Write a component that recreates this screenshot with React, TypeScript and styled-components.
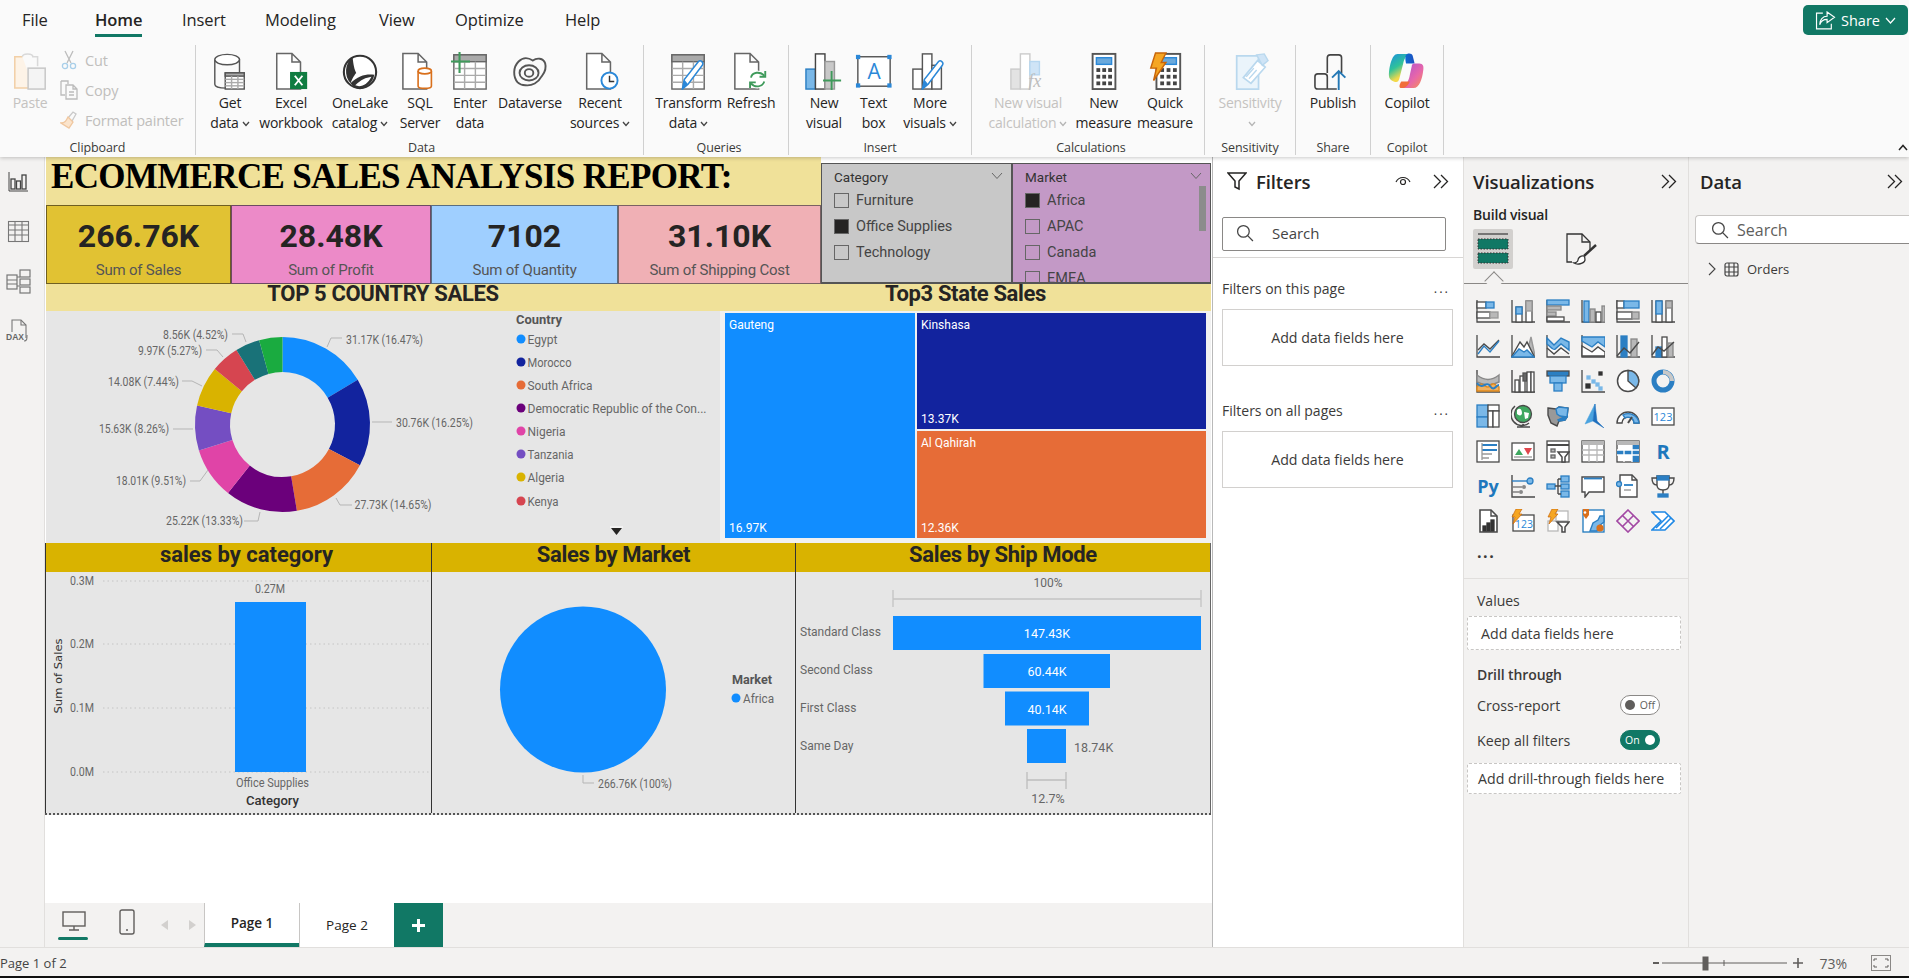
import React from "react";
import styled, { createGlobalStyle } from "styled-components";

const UI = `"Open Sans", "Noto Sans", sans-serif`;
const DIN = `Roboto, "Liberation Sans", sans-serif`;
const GREEN = "#117865";
const D = "#4a4a4a";
const B = "#2b7fc3";
const L = "#7ab8e8";
const G = "#b8b8b8";

const Global = createGlobalStyle`
  html, body { margin: 0; padding: 0; background: #fff; overflow: hidden; }
  body { font-family: ${UI}; color: #252423; }
`;

const Page = styled.div`
  width: 1909px; height: 978px; display: flex; flex-direction: column; overflow: hidden; background: #fff;
`;
const Ribbon = styled.header`
  height: 157px; flex: none; background: #fafafa; box-shadow: 0 1px 4px rgba(0,0,0,.22);
  position: relative; z-index: 3; display: flex; flex-direction: column;
`;
const TabRow = styled.nav`
  height: 45px; display: flex; padding-left: 22px; position: relative;
`;
const MenuTab = styled.div<{ $w: number; $active?: boolean }>`
  width: ${p => p.$w}px; flex: none; height: 37px; padding-top: 7px; box-sizing: border-box; font-size: 16.5px; line-height: 26px; letter-spacing: -0.1px;
  font-weight: ${p => (p.$active ? 600 : 400)};
  span { display: inline-block; height: 27px; border-bottom: ${p => (p.$active ? `3px solid ${GREEN}` : "none")}; box-sizing: content-box; }
`;
const ShareButton = styled.button`
  position: absolute; right: 1px; top: 5px; width: 105px; height: 30px; border: 0; border-radius: 5px; background: ${GREEN};
  color: #fff; font: 400 14.5px ${UI}; display: flex; align-items: center; justify-content: center; gap: 5px; padding: 0;
`;
const GroupRow = styled.div`display: flex; height: 110px;`;
const Group = styled.section<{ $w: number; $pad?: number; $last?: boolean }>`
  width: ${p => p.$w}px; flex: none; box-sizing: border-box; display: flex; flex-direction: column; padding-left: ${p => p.$pad ?? 0}px;
  border-right: 1px solid #d0d0d0;
`;
const GroupBody = styled.div`display: flex; flex: 1;`;
const GroupLabel = styled.div<{ $off?: number }>`
  font-size: 12.5px; line-height: 14px; height: 14px; text-align: center; color: #3b3a39; margin-left: ${p => p.$off ?? 0}px; letter-spacing: -0.1px;
`;
const BigBtn = styled.div<{ $w: number; $off?: boolean }>`
  width: ${p => p.$w}px; flex: none; padding-top: 7px; display: flex; flex-direction: column; align-items: center;
  color: ${p => (p.$off ? "#c4c2c0" : "#252423")}; font-size: 14px; line-height: 20px; text-align: center; letter-spacing: -0.2px; white-space: nowrap;
  svg.ico { width: 38px; height: 38px; margin-bottom: 3px; display: block; }
`;
const Caret = styled.svg`width: 8px; height: 6px; margin-left: 3px; display: inline-block; vertical-align: 1px;`;
const Clip = styled.div`display: flex; flex: 1; padding-left: 12px;`;
const PasteBtn = styled(BigBtn)`width: 36px;`;
const ClipList = styled.div`display: flex; flex-direction: column; padding: 0 0 0 12px;`;
const ClipItem = styled.div`
  height: 30px; display: flex; align-items: center; gap: 7px; color: #c0bebc; font-size: 14.5px; letter-spacing: -0.2px; white-space: nowrap;
  svg { width: 18px; height: 20px; flex: none; }
`;
const CollapseBtn = styled.svg`position: absolute; right: 1px; bottom: 6px; width: 10px; height: 7px;`;

const Main = styled.main`flex: 1; display: flex; min-height: 0;`;
const Rail = styled.aside`
  width: 45px; flex: none; box-sizing: border-box; background: #f3f2f1; border-right: 1px solid #e1dfdd; display: flex; flex-direction: column; align-items: center;
  padding: 12px 7px 0 0; gap: 25px;
  svg { width: 25px; height: 25px; }
`;
const Center = styled.div`
  width: 1168px; flex: none; box-sizing: border-box; border-right: 1px solid #b9b9b9; display: flex; flex-direction: column; background: #fff;
`;
const CanvasWrap = styled.div`flex: 1;`;
const TopBlock = styled.div`display: flex; height: 127px; padding-left: 1px; width: 1166px; box-sizing: border-box;`;
const TitleCol = styled.div`width: 775px; flex: none; display: flex; flex-direction: column;`;
const TitleBand = styled.h1`
  margin: 0; height: 48px; box-sizing: border-box; padding: 2px 0 0 5px; background: #f0e199; font: 700 35px/36px "Liberation Serif", serif; color: #000; white-space: nowrap;
  letter-spacing: -0.66px;
`;
const KpiRow = styled.div`display: flex; flex: 1;`;
const Kpi = styled.div<{ $w: number; $bg: string; $bc: string }>`
  width: ${p => p.$w}px; box-sizing: border-box; background: ${p => p.$bg}; border: 1.5px solid ${p => p.$bc};
  display: flex; flex-direction: column; align-items: center; padding-top: 9px; font-family: ${DIN};
`;
const KpiValue = styled.div`font-size: 32px; font-weight: 700; line-height: 42px; color: #252423;`;
const KpiLabel = styled.div`font-size: 15px; line-height: 20px; color: #555; margin-top: 3px; letter-spacing: -0.2px; white-space: nowrap;`;
const Slicers = styled.div`flex: 1; display: flex; padding-top: 6px; background: #fff;`;
const Slicer = styled.div<{ $w: number; $bg: string }>`
  width: ${p => p.$w}px; flex: none; box-sizing: border-box; background: ${p => p.$bg}; border: 1px solid #555; border-bottom-width: 2px;
  padding: 5px 0 0 12px; position: relative; overflow: hidden; font-family: ${DIN};
`;
const SlicerTitle = styled.div`font-size: 13.5px; line-height: 16px; color: #333; font-weight: 400; height: 18px;`;
const SlicerChevron = styled.svg`position: absolute; right: 8px; top: 8px; width: 12px; height: 8px;`;
const SlicerItem = styled.div`height: 26px; display: flex; align-items: center; gap: 7px; font: 400 14.5px ${DIN}; color: #444; white-space: nowrap;`;
const Box = styled.i<{ $on?: boolean }>`
  width: 15px; height: 15px; box-sizing: border-box; flex: none; border: 1px solid #666; background: ${p => (p.$on ? "#252423" : "transparent")};
`;
const ScrollThumb = styled.div`position: absolute; right: 4px; top: 22px; width: 7px; height: 45px; background: #8c8c8c;`;
const ChartRow = styled.div`display: flex; height: 259px; padding-left: 1px; width: 1166px; box-sizing: border-box;`;
const ChartCol = styled.div<{ $w: number }>`width: ${p => p.$w}px; flex: none; display: flex; flex-direction: column;`;
const Band = styled.h2<{ $bg: string; $h: number; $lh: number; $pl?: number; $ls?: number }>`
  margin: 0; height: ${p => p.$h}px; flex: none; background: ${p => p.$bg}; font: 700 22px/${p => p.$lh}px ${DIN}; text-align: center; color: #252423;
  letter-spacing: ${p => p.$ls ?? -0.35}px; padding-left: ${p => p.$pl ?? 0}px; box-sizing: border-box;
`;
const DonutBody = styled.div`flex: 1; background: #e6e6e6; svg { display: block; }`;
const TreeBody = styled.div`
  flex: 1; background: #f1f1f1; padding: 2px 5px 5px 5px; display: grid; grid-template-columns: 190px 289px; grid-template-rows: 116px 107px; gap: 2px;
`;
const Tile = styled.div<{ $bg: string; $tall?: boolean }>`
  background: ${p => p.$bg}; grid-row: ${p => (p.$tall ? "1 / span 2" : "auto")}; color: #fff; font: 400 12px/16px ${DIN}; padding: 4px 4px 2px 4px;
  display: flex; flex-direction: column; justify-content: space-between;
`;
const BottomRow = styled.div`
  display: grid; grid-template-columns: 386px 364px 416px; width: 1166px; height: 270px; border-bottom: 2px dotted #555; box-sizing: content-box; background: #e6e6e6; overflow: hidden;
`;
const BottomCol = styled.div<{ $end?: boolean }>`
  display: flex; flex-direction: column; border-left: 1.5px solid #333; min-width: 0; ${p => (p.$end ? "border-right: 1.5px solid #666;" : "")}
  svg { display: block; }
`;
const ChartText = styled.text<{ $c?: string; $s?: number; $b?: number }>`
  font-family: ${DIN}; font-size: ${p => p.$s ?? 12}px; fill: ${p => p.$c ?? "#666"}; font-weight: ${p => p.$b ?? 400};
`;
const AxisText = styled.text`font-family: "DejaVu Sans", sans-serif; font-size: 11px; fill: #333;`;

const PageBar = styled.div`height: 44px; flex: none; display: flex; background: #f3f2f1;`;
const ViewIcons = styled.div`width: 159px; flex: none; display: flex; position: relative;`;
const ViewIcon = styled.div<{ $w: number; $on?: boolean }>`
  width: ${p => p.$w}px; height: 44px; flex: none; display: flex; justify-content: center; padding-top: 6px; box-sizing: border-box; position: relative;
  &::after { content: ""; display: ${p => (p.$on ? "block" : "none")}; position: absolute; left: 13px; width: 30px; height: 3px; bottom: 7px; border-radius: 2px; background: ${GREEN}; }
`;
const Arrows = styled.div`display: flex; align-items: center; gap: 21px; margin-left: 10px; svg { width: 7px; height: 10px; }`;
const PageTab = styled.div<{ $on?: boolean }>`
  width: 95px; flex: none; box-sizing: border-box; background: #fff; border-left: 1px solid #c8c6c4; display: flex; align-items: center; justify-content: center;
  font-size: 13.5px; font-weight: ${p => (p.$on ? 600 : 400)}; border-bottom: ${p => (p.$on ? `4px solid ${GREEN}` : "0")}; color: #252423;
`;
const AddTab = styled.div`width: 49px; flex: none; background: ${GREEN}; display: flex; align-items: center; justify-content: center; svg { width: 15px; height: 15px; }`;

const Pane = styled.aside<{ $w: number; $bg: string; $b?: boolean }>`
  width: ${p => p.$w}px; flex: none; box-sizing: border-box; background: ${p => p.$bg}; ${p => (p.$b ? "border-right: 1px solid #e1dfdd;" : "")} position: relative;
`;
const PaneHead = styled.div<{ $pad: number }>`
  height: 48px; display: flex; align-items: center; padding: 0 ${p => p.$pad}px; box-sizing: border-box; gap: 9px;
  font-size: 18.5px; font-weight: 600; color: #252423; letter-spacing: -0.1px;
`;
const Grow = styled.div`flex: 1;`;
const FilterSearch = styled.div`
  margin: 12px 0 0 9px; width: 224px; height: 34px; box-sizing: border-box; border: 1px solid #8a8886; border-radius: 2px; display: flex; align-items: center; padding: 0 0 2px 13px; gap: 18px;
  font-size: 15px; color: #444;
`;
const Divider = styled.div`height: 1px; background: #d8d6d4; margin-top: 6px;`;
const FilterSection = styled.div<{ $t: number }>`
  margin: ${p => p.$t}px 10px 0 9px; display: flex; justify-content: space-between; align-items: center; font-size: 14px; height: 20px; color: #3b3a39;
`;
const Dots = styled.span`letter-spacing: 2px; font-size: 13px; margin-right: 3px;`;
const FilterCard = styled.div`
  margin: 11px 10px 0 9px; height: 57px; box-sizing: border-box; border: 1px solid #d2d0ce; display: flex; align-items: center; justify-content: center; font-size: 14.2px; color: #3b3a39; background: #fff;
`;
const BuildLabel = styled.div`margin: 0 0 0 9px; font-size: 14px; font-weight: 600; line-height: 20px; height: 24px; letter-spacing: -0.2px;`;
const BuildTabs = styled.div`display: flex; margin-left: 9px; height: 40px; gap: 48px; align-items: center;`;
const BuildTab = styled.div<{ $on?: boolean }>`
  width: 40px; height: 40px; background: ${p => (p.$on ? "#d2d0ce" : "transparent")}; border-radius: 2px; display: flex; align-items: center; justify-content: center; svg { width: 34px; height: 34px; }
`;
const NotchLine = styled.div`
  height: 15px; border-bottom: 1px solid #8a8886; position: relative; box-sizing: border-box;
  &::after { content: ""; position: absolute; left: 23px; bottom: -5px; width: 13px; height: 13px; background: #f3f2f1; border-left: 1px solid #8a8886; border-top: 1px solid #8a8886; transform: rotate(45deg) scale(.98); }
`;
const VizGrid = styled.div`
  display: grid; grid-template-columns: repeat(6, 35px); grid-auto-rows: 35px; margin: 9px 0 0 6px;
  justify-items: center; align-items: center;
  svg { width: 24px; height: 24px; display: block; }
`;
const More = styled.div`margin: -1px 0 0 0; padding: 7px 0 0 13px; box-sizing: border-box; font-size: 16px; line-height: 16px; letter-spacing: 1.5px; font-weight: 700; color: #3b3a39; height: 41px;`;
const PaneRule = styled.div`height: 1px; background: #e1dfdd; margin-top: 0;`;
const FieldLabel = styled.div<{ $t: number; $sb?: boolean }>`
  margin: ${p => p.$t}px 0 0 13px; font-size: 14px; line-height: 20px; font-weight: ${p => (p.$sb ? 600 : 400)}; color: #3b3a39; letter-spacing: ${p => (p.$sb ? "-0.1px" : "0")};
`;
const Drop = styled.div<{ $h: number; $t: number; $l: number }>`
  margin: ${p => p.$t}px 0 0 3px; width: 214px; height: ${p => p.$h}px; box-sizing: border-box; border: 1px dashed #c8c6c4; border-radius: 2px; background: #fff;
  display: flex; align-items: center; padding-left: ${p => p.$l}px; font-size: 14.2px; color: #3b3a39; white-space: nowrap;
`;
const ToggleRow = styled.div<{ $t: number }>`
  margin: ${p => p.$t}px 0 0 13px; width: 183px; display: flex; justify-content: space-between; align-items: center; font-size: 14.2px; height: 20px; color: #3b3a39;
`;
const Toggle = styled.div<{ $on?: boolean }>`
  width: 40px; height: 20px; box-sizing: border-box; border-radius: 10px; border: 1px solid ${p => (p.$on ? GREEN : "#8a8886")}; background: ${p => (p.$on ? GREEN : "#fff")};
  color: ${p => (p.$on ? "#fff" : "#605e5c")}; font-size: 10.5px; display: flex; align-items: center; justify-content: space-between; padding: 0 4px; flex-direction: ${p => (p.$on ? "row" : "row-reverse")};
  &::after { content: ""; width: 10px; height: 10px; border-radius: 50%; background: ${p => (p.$on ? "#fff" : "#605e5c")}; }
`;
const DataSearch = styled.div`
  margin: 10px 0 0 6px; height: 29px; box-sizing: border-box; background: #fff; border: 1px solid #c8c6c4; border-bottom-color: #8a8886; border-right: 0; border-radius: 4px 0 0 4px;
  display: flex; align-items: center; padding-left: 15px; gap: 8px; font-size: 16px; color: #605e5c;
`;
const TreeRow = styled.div`margin: 16px 0 0 19px; display: flex; align-items: center; gap: 8px; font-size: 13px; color: #3b3a39;`;

const Status = styled.footer`
  height: 29px; flex: none; box-sizing: border-box; background: #f3f2f1; border-top: 1px solid #e1dfdd; display: flex; align-items: center; font-size: 13px; color: #444; padding-top: 2px;
`;
const ZoomBox = styled.div`margin-left: auto; display: flex; align-items: center; padding-right: 18px; color: #605e5c;`;
const ZoomPct = styled.span`margin: 0 24px 0 16px; font-size: 14px;`;
const Black = styled.div`height: 2px; flex: none; background: #111;`;

/* ---- icons ---- */
const R = (x: number, y: number, w: number, h: number, f = "#fff", s = D) => <rect x={x} y={y} width={w} height={h} fill={f} stroke={s} />;
const P = (d: string, s = D, f = "none", w = 1.4) => <path d={d} stroke={s} fill={f} strokeWidth={w} />;
const Ax = () => P("M1 1V23H24", D, "none", 1.3);
const Ico = ({ children, v = 24 }: { children: React.ReactNode; v?: number }) => (
  <svg viewBox={`0 0 ${v} ${v}`} fill="none" strokeWidth={1.3}>{children}</svg>
);
const Big = ({ children }: { children: React.ReactNode }) => <svg className="ico" viewBox="0 0 40 40" fill="none" strokeWidth={1.5}>{children}</svg>;
const Doc = (x = 6, s = "#666") => P(`M${x} 1.5h16l9 9V39H${x}zM${x + 16} 1.5v9h9`, s, "#fff", 1.6);
const Pencil = (x = 0, y = 0) => (
  <g transform={`translate(${x} ${y})`}>
    <path d="M3 38l2-10L20 9c2-2 6 1 4 4L9 33z" fill="#fff" stroke="#2b88d8" strokeWidth="1.6" />
    <path d="M3 38l2-10 4 5z" fill="#2b88d8" />
  </g>
);
const TableIco = (x: number, y: number, w: number, h: number, s = "#666") => (
  <g stroke={s} strokeWidth="1.5">
    <rect x={x} y={y} width={w} height={h} fill="#fff" />
    <rect x={x} y={y} width={w} height={h / 5} fill="#aaa" />
    {[1, 2].map(i => <path key={i} d={`M${x + (w * i) / 3} ${y + h / 5}V${y + h}`} stroke="#aaa" />)}
    {[2, 3, 4].map(i => <path key={i} d={`M${x} ${y + (h * i) / 5}H${x + w}`} stroke="#aaa" />)}
  </g>
);
const Calc = (x: number, w: number) => (
  <g>
    <rect x={x} y={2} width={w} height={37} fill="#fff" stroke="#555" strokeWidth="2" />
    <rect x={x + 4} y={6} width={w - 8} height={7} fill="#6aa9dc" stroke="#2b88d8" />
    {[17, 24, 31].map(y => [0, 1, 2].map(i => <rect key={`${y}${i}`} x={x + 4 + i * ((w - 12) / 2 + .2)} y={y} width={4} height={4} fill="#444" />))}
  </g>
);

const CaretIcon = ({ c = "#444" }: { c?: string }) => (
  <Caret viewBox="0 0 8 6"><path d="M1 1l3 3.5L7 1" stroke={c} strokeWidth="1.3" fill="none" /></Caret>
);

const GetData = () => <Big><path d="M4 8v26c0 3 6 4 12 4V22h14V8" stroke="#555" /><ellipse cx="17" cy="8" rx="13" ry="5.5" fill="#fff" stroke="#555" />{TableIco(15, 22, 20, 17, "#555")}</Big>;
const Excel = () => <Big>{Doc(5)}<rect x="19" y="21" width="18" height="18" fill="#107c41" /><path d="M24 25l8 10M32 25l-8 10" stroke="#fff" strokeWidth="2" /></Big>;
const OneLake = () => <Big><circle cx="20" cy="21" r="17" fill="#fff" stroke="#333" strokeWidth="2.2" /><path d="M12 5C4 12 3 25 10 33c3-8 6-11 6-11-3-6-3-12-4-17z" fill="#333" /><path d="M10 33c8-8 16-10 25-9-1 8-8 14-15 15-4 0-7-2-10-6z" fill="#333" /><path d="M15 35c6-6 11-8 17-9-3 6-8 10-13 10z" fill="#fff" /></Big>;
const Sql = () => <Big>{Doc(2)}<path d="M18 20v16c0 3 14 3 14 0V20" fill="#fff" stroke="#d9701c" strokeWidth="1.7" /><ellipse cx="25" cy="20" rx="7" ry="3" fill="#fff" stroke="#d9701c" strokeWidth="1.7" /></Big>;
const Enter = () => <Big>{TableIco(3, 3, 34, 36)}<path d="M9 0v22M0 10h20" stroke="#3f9a5b" strokeWidth="2.2" /></Big>;
const Dataverse = () => <Big><path d="M7 32C2 26 2 16 8 10c6-6 12-3 15-1 4-3 11-3 13 3 2 7-2 11-4 14-3 6-10 10-17 9-3 0-6-1-8-3z" stroke="#555" strokeWidth="2" /><ellipse cx="19" cy="22" rx="10" ry="8" stroke="#555" strokeWidth="2" /><ellipse cx="19" cy="22" rx="4.5" ry="4" stroke="#555" strokeWidth="2" /></Big>;
const Recent = () => <Big>{Doc(6)}<circle cx="30" cy="30" r="8.5" fill="#fff" stroke="#2b88d8" strokeWidth="2" /><path d="M30 25v6h5" stroke="#333" /></Big>;
const Transform = () => <Big>{TableIco(2, 3, 34, 36)}{Pencil(10, 1)}</Big>;
const Refresh = () => <Big>{Doc(3)}<circle cx="27" cy="29" r="8" fill="#fff" stroke="#fff" strokeWidth="3" /><path d="M20 27c1-6 10-7 14-2M34 31c-2 6-10 7-14 2" stroke="#3f9a5b" strokeWidth="2" /><path d="M35 20v6h-6M19 38v-6h6" stroke="#3f9a5b" strokeWidth="2" /></Big>;
const NewVisual = () => <Big>{R(1, 18, 10, 21, "#7ab8e8", "#2b7fc3")}{R(11, 2, 10, 37, "#fff", "#444")}{R(21, 10, 10, 29, "#c8c8c8", "#999")}<path d="M28 20v20M19 30h19" stroke="#3f9a5b" strokeWidth="2" /></Big>;
const TextBox = () => <Big><rect x="3" y="5" width="34" height="31" fill="#fff" stroke="#555" />{[[1, 3], [34, 3], [1, 33], [34, 33]].map(([x, y]) => <rect key={`${x}${y}`} x={x} y={y} width="4.5" height="4.5" fill="#2b88d8" />)}<text x="20" y="28" textAnchor="middle" fontFamily="Open Sans" fontSize="22" fill="#2b88d8">A</text></Big>;
const MoreVis = () => <Big>{R(2, 18, 10, 21, "#fff", "#555")}{R(12, 2, 10, 37, "#fff", "#555")}{R(22, 14, 10, 25, "#fff", "#555")}{Pencil(9, 1)}</Big>;
const Fx = () => <Big>{R(2, 18, 10, 21, "#e3e3e3", "#ccc")}{R(12, 2, 10, 37, "#fff", "#ccc")}{R(22, 10, 10, 14, "#cfe4f6", "#b7d7f0")}<text x="27" y="37" textAnchor="middle" fontFamily="Liberation Serif" fontStyle="italic" fontSize="19" fill="#bdbdbd">fx</text></Big>;
const Measure = () => <Big>{Calc(8, 24)}</Big>;
const Quick = () => <Big>{Calc(11, 25)}<path d="M10 1h11l-5 10h5L8 30l3-13H5z" fill="#f5a623" stroke="#c8650a" /></Big>;
const Sens = () => <Big><path d="M6 4h23v35H6z" fill="#eaf4fb" stroke="#b9d8ee" strokeWidth="1.8" /><path d="M13 27l15-18 8 7-15 17z" fill="#fff" stroke="#b9d8ee" strokeWidth="1.8" /><path d="M27 3l8-1 4 7-6 5z" fill="#cfe4f6" stroke="#b9d8ee" /><path d="M16 26l8-9M19 28l8-9" stroke="#b9d8ee" /></Big>;
const Publish = () => <Big><path d="M14 22V6c0-2 1-3 3-3h9c2 0 3 1 3 3v16" stroke="#444" strokeWidth="1.7" /><path d="M4 39c-2 0-3-1-3-3V26c0-2 1-3 3-3h7c2 0 3 1 3 3v13zM14 39h10" stroke="#444" strokeWidth="1.7" /><path d="M26 41V20M19 27l7-7 7 7" stroke="#2478b5" strokeWidth="2" /></Big>;
const Copilot = () => (
  <Big>
    <defs>
      <linearGradient id="cpA" x1="0" y1="0" x2="0.5" y2="1"><stop offset="0" stopColor="#1b8fe0" /><stop offset=".5" stopColor="#2fc29a" /><stop offset=".85" stopColor="#f3d94a" /></linearGradient>
      <linearGradient id="cpB" x1="0" y1="0" x2="1" y2="1"><stop offset="0" stopColor="#a64fd8" /><stop offset=".6" stopColor="#e867a8" /><stop offset="1" stopColor="#f6954c" /></linearGradient>
      <linearGradient id="cpC" x1="0" y1="0" x2="1" y2="0"><stop offset="0" stopColor="#0f6cd0" /><stop offset="1" stopColor="#1d4fc0" /></linearGradient>
    </defs>
    <path d="M10 2h14c-5 1-7 5-8 10l-4 16c-1 4-3 4-6 3-3-1-5-3-5-6 0-9 3-23 9-23z" fill="url(#cpA)" />
    <path d="M19 3c2-2 6-2 7 1l2 8h-9c-1-4-1-7 0-9z" fill="url(#cpC)" />
    <path d="M28 12h5c4 0 5 3 4 8-1 8-4 18-10 18H14c5-2 8-8 9-14l2-9c0-2 1-3 3-3z" fill="url(#cpB)" />
    <path d="M14 31h9c-2 4-4 7-9 7-3 0-2-4 0-7z" fill="#f16d3a" />
  </Big>
);

const vizIcons: React.ReactNode[] = [
  <>{Ax()}{R(1, 3, 9, 6)}{R(10, 3, 8, 6, L, B)}{R(1, 13, 13, 6)}{R(14, 13, 8, 6, G, "#999")}</>,
  <>{Ax()}{R(5, 8, 6, 15)}{R(5, 8, 6, 7, L, B)}{R(15, 2, 6, 21)}{R(15, 2, 6, 10, G, "#999")}</>,
  <>{Ax()}{R(1, 1, 22, 5, L, B)}{R(1, 7, 14, 4, G, "#888")}{R(1, 13, 9, 4, G, "#888")}{R(1, 18, 17, 4)}</>,
  <>{Ax()}{R(3, 2, 5, 21, L, B)}{R(9, 10, 5, 13, G, "#888")}{R(15, 13, 5, 10)}{R(21, 7, 3, 16, G, "#888")}</>,
  <>{Ax()}{R(1, 2, 7, 7)}{R(8, 2, 15, 7, L, B)}{R(1, 13, 15, 7)}{R(16, 13, 7, 7, G, "#888")}</>,
  <>{Ax()}{R(5, 2, 6, 21)}{R(5, 2, 6, 13, L, B)}{R(15, 2, 6, 21)}{R(15, 2, 6, 7, G, "#888")}</>,
  <>{Ax()}{P("M2 16l6-6 6 5 9-9", D)}{P("M2 20l6-8 6 6 9-11", B)}</>,
  <>{Ax()}{P("M15 22L20 3l4 19z", "#999", G)}{P("M1 22l8-14 4 5 3-5 7 14z", D, "#fff")}{P("M1 23l7-8 5 3 3-2 7 7z", B, L)}</>,
  <>{Ax()}{P("M1 4l7 7 7-7 8 4v8l-8-6-7 6-7-6z", B, L)}{P("M1 14l7 6 7-6 8 6", D, "#fff")}</>,
  <>{Ax()}{P("M1 3h23v10l-7-5-6 5-10-6z", B, L)}{P("M1 12l10 6 6-5 7 5v4H1z", D, "#fff")}</>,
  <>{Ax()}{R(5, 2, 6, 21, B, B)}{R(15, 5, 6, 18, G, "#888")}{P("M1 22l7-8 6 5 9-11", D)}</>,
  <>{Ax()}{R(5, 13, 6, 10, B, B)}{R(11, 3, 5, 20)}{R(17, 9, 5, 14, G, "#888")}{P("M1 21l6-8 6 4 10-9", D)}</>,
  <>{P("M1 1V23H24", D)}{P("M1 6c8 6 14 6 22 0v7c-8 4-14 4-22 0z", "#888", G)}{P("M1 18c6-8 9 4 13-1s6 0 9 1v4H1z", "#e08a1e", "#f0b060")}{P("M1 14c6 8 9-3 13 3s6-1 9-1", B, "none", 2)}</>,
  <>{P("M1 1V23H24", D)}{R(4, 11, 4, 12)}{R(9, 7, 5, 16, "#fff", D)}{R(12, 4, 4, 8, "#666", "#555")}{R(16, 3, 4, 20)}{R(20, 3, 3, 20)}</>,
  <>{R(1, 2, 22, 5, B, D)}{R(4, 7, 16, 7, L, B)}{R(8, 14, 8, 8, L, B)}</>,
  <>{Ax()}{R(5, 15, 4, 4, "#333", "#333")}{R(11, 11, 3, 3, L, L)}{R(15, 14, 3, 3, L, L)}{R(6, 7, 3, 3, L, L)}{R(18, 3, 3, 3, "#333", "#333")}{R(18, 18, 3, 3, L, L)}</>,
  <><circle cx="12" cy="12" r="10.5" fill="#fff" stroke={D} strokeWidth="1.5" />{P("M12 12V1.5A10.5 10.5 0 0 1 20 19z", D, L)}</>,
  <><circle cx="12" cy="12" r="9" stroke={B} strokeWidth="5" /><path d="M12 3A9 9 0 0 1 21 12" stroke="#c8c8c8" strokeWidth="4" /></>,
  <>{R(1, 1, 11, 12, L, B)}{R(1, 13, 11, 10, L, B)}{R(12, 1, 11, 6)}{R(12, 7, 5, 16)}{R(17, 7, 6, 16)}</>,
  <><circle cx="12" cy="10" r="8.5" fill="#3fa860" stroke={D} /><path d="M6 6c3-3 5 0 5 3s-3 3-5 1zM13 8l5 1-1 5-3 1z" fill="#fff" /><path d="M4 2a11 11 0 0 0 14 17M12 20v3M6 23h13" stroke={D} strokeWidth="1.5" /></>,
  <>{P("M2 4l8 1 3-2 9 1-1 9-2 3-6 1-2 5-6-3-3-8z", D, "#999")}{P("M10 5l3-2 9 1-1 9-7-1-3-2z", B, L)}{P("M12 16l6-3 3 0-2 3-6 1z", B, B)}</>,
  <>{P("M14 0L4 20l8-3z", "#4aa3df", "#4aa3df", 0.5)}{P("M14 0l2 17 7 7-11-7z", "#1e6fbd", "#1e6fbd", 0.5)}</>,
  <>{P("M1 19a11 11 0 0 1 22 0h-5a6 6 0 0 0-12 0z", D, "#fff")}{P("M7 11a11 11 0 0 1 16 8h-5a6 6 0 0 0-9-5z", B, L)}{P("M12 19l4-6", D, "none", 2)}</>,
  <>{R(1, 4, 22, 17, "#fff", D)}<text x="12" y="17" textAnchor="middle" fontFamily="Open Sans" fontSize="11" fill="#2b88d8">123</text></>,
  <>{R(1, 2, 22, 21, "#fff", D)}<path d="M6 6h15M6 11h15" stroke={B} strokeWidth="2" /><path d="M6 15h10M6 19h7" stroke="#999" strokeWidth="1.5" /><path d="M6 4v17" stroke="#999" /></>,
  <>{R(1, 4, 22, 17, "#fff", D)}<path d="M4 16l4-6 4 6z" fill="#3fa860" /><path d="M13 9h8l-4 7z" fill="#e0464c" /><path d="M3 18h18" stroke="#999" /></>,
  <>{R(1, 2, 22, 21, "#fff", D)}<path d="M1 6h22" stroke={D} strokeWidth="2" />{R(5, 10, 4, 3, G, "#666")}{R(5, 16, 4, 3, G, "#666")}{P("M12 13h11l-4 5v5h-3v-5z", D, "#fff", 1.5)}</>,
  <>{R(1, 2, 22, 21, "#fff", D)}<rect x="1" y="2" width="22" height="4" fill={G} /><path d="M8 6v17M16 6v17M1 11h22M1 16h22" stroke={G} /></>,
  <>{R(1, 2, 22, 21, "#fff", D)}<rect x="1" y="2" width="22" height="4" fill={G} /><rect x="1" y="11" width="22" height="5" fill={B} /><rect x="16" y="6" width="7" height="17" fill={B} /><path d="M8 6v17M16 6v17M1 11h22M1 16h22" stroke="#fff" /></>,
  <text x="12" y="20" textAnchor="middle" fontFamily="Open Sans" fontWeight="700" fontSize="20" fill="#1e78bd">R</text>,
  <text x="12" y="19" textAnchor="middle" fontFamily="Open Sans" fontWeight="700" fontSize="18" fill="#1e78bd">Py</text>,
  <>{P("M1 1V23H24", D)}{P("M1 7h15", B)}<circle cx="19" cy="7" r="3" fill={L} stroke={B} />{P("M1 13h10", "#777")}<circle cx="13" cy="13" r="2" fill="#888" />{P("M1 18h7", "#777")}<circle cx="10" cy="18" r="2" fill="#888" /></>,
  <>{R(1, 10, 8, 5, L, B)}{R(15, 2, 8, 6, L, B)}{R(15, 10, 8, 5, L, B)}{R(15, 17, 8, 6, L, B)}{P("M9 12h3M12 5v15M12 5h3M12 12h3M12 20h3", D)}</>,
  <>{P("M1 3h22v15H8l-4 5v-5H1z", D, "#fff")}{P("M3 4.5h18", B, "none", 1.8)}</>,
  <>{P("M4 1h12l5 5v17H4z", D, "#fff")}{P("M16 1v5h5", D)}<circle cx="3" cy="10" r="2.5" fill={L} stroke={B} />{P("M8 11h9", B, "none", 1.8)}{P("M8 16h7", "#999")}</>,
  <>{P("M6 2h12v9c0 4-3 5-6 5s-6-1-6-5z", D, "#fff")}{R(6, 2, 12, 4, B, B)}{P("M6 4H1c0 5 2 7 5 7M18 4h5c0 5-2 7-5 7M12 16v4", D)}{R(7, 20, 10, 3, B, B)}</>,
  <>{P("M4 1h11l6 6v16H4z", D, "#fff", 1.6)}{P("M15 1v6h6", D)}{R(7, 17, 3, 5, "#333", "#333")}{R(11, 14, 3, 8, "#333", "#333")}{R(15, 11, 3, 11, "#333", "#333")}</>,
  <>{R(2, 6, 21, 16, "#fff", D)}<text x="13" y="19" textAnchor="middle" fontFamily="Open Sans" fontSize="10.5" fill="#2b88d8">123</text><path d="M5 0h6L8 5h3L2 15l2-7H1z" fill="#f5a623" stroke="#c8650a" strokeWidth=".7" /></>,
  <>{R(10, 2, 12, 10, "#fff", G)}{R(2, 12, 10, 10, "#fff", G)}{P("M11 13h12l-4 5v5h-3v-5z", D, "#fff", 1.5)}<path d="M6 0h6L9 5h3L3 15l2-7H2z" fill="#f5a623" stroke="#c8650a" strokeWidth=".7" /></>,
  <>{R(2, 1, 21, 22, "#fff", "#1e78bd")}{P("M9 22l3-8 5-3 2-4h4v6l-5 4-2 5z", B, L)}<path d="M2 0h6v6l-3 4-3-4z" fill="#d9701c" /><circle cx="19" cy="19" r="3.6" fill="#d9701c" /><circle cx="4" cy="3.5" r="1.3" fill="#fff" /></>,
  <>{P("M12 1l11 11-11 11L1 12z", "#a349a4", "none", 1.6)}{P("M6.5 6.5l11 11M12 12L6.5 17.5M17.5 6.5L12 12", "#a349a4", "none", 1.6)}</>,
  <>{P("M1 3h13l9 9-9 9H1l9-9z", "#1e88e5", "#fff", 1.6)}{P("M5 19L17 7M9 20l11-11", "#1e88e5", "none", 1.5)}</>,
];

const Cross = () => (
  <svg viewBox="0 0 18 20" fill="none" stroke="#bcbcbc" strokeWidth="1.3"><path d="M5 1l6 12M13 1L7 13" /><circle cx="5" cy="16" r="2.6" stroke="#a9cfe9" /><circle cx="13" cy="16" r="2.6" stroke="#a9cfe9" /></svg>
);
const CopyI = () => (
  <svg viewBox="0 0 18 20" fill="none" stroke="#bcbcbc" strokeWidth="1.3"><path d="M1 1h7l0 3M1 1v14h4" /><path d="M6 5h7l4 4v10H6zM13 5v4h4M9 12h5M9 15h5" /></svg>
);
const Brush = () => (
  <svg viewBox="0 0 18 20" fill="none" stroke="#c9c9c9" strokeWidth="1.3"><path d="M8 8l5-6 3 2-4 7z" /><path d="M8 7l5 5-4 6-8-5c4 0 5-2 7-6z" fill="#fbe4cc" stroke="#f0c79f" /></svg>
);
const Chevrons = () => (
  <svg width="18" height="17" viewBox="0 0 18 17" fill="none" stroke="#252423" strokeWidth="1.3"><path d="M2 2l6.5 6.5L2 15M9 2l6.5 6.5L9 15" /></svg>
);
const SearchI = ({ size = 17 }: { size?: number }) => (
  <svg width={size} height={size} viewBox="0 0 17 17" fill="none" stroke="#444" strokeWidth="1.2"><circle cx="7" cy="7" r="5.5" /><path d="M11 11l5 5" /></svg>
);

/* ---- charts ---- */
const slices: [number, string][] = [
  [16.47, "#118DFF"], [16.25, "#12239E"], [14.65, "#E66C37"], [13.33, "#6B007B"], [9.51, "#E044A7"],
  [8.26, "#744EC2"], [7.44, "#D9B300"], [5.27, "#D64550"], [4.52, "#197278"], [4.3, "#1AAB40"],
];
const CX = 282.5, CY = 424.5, RO = 87.5, RI = 52.5;
const pt = (r: number, pct: number) => {
  const a = (pct / 100) * 2 * Math.PI - Math.PI / 2;
  return `${(CX + r * Math.cos(a)).toFixed(2)} ${(CY + r * Math.sin(a)).toFixed(2)}`;
};
const donutPaths = (() => {
  let s = 0;
  return slices.map(([v, c]) => {
    const e = s + v;
    const big = v > 50 ? 1 : 0;
    const d = `M${pt(RO, s)}A${RO} ${RO} 0 ${big} 1 ${pt(RO, e)}L${pt(RI, e)}A${RI} ${RI} 0 ${big} 0 ${pt(RI, s)}Z`;
    s = e;
    return <path key={c} d={d} fill={c} />;
  });
})();

const Lab = ({ x, y, w, c, s, b, anchor, children }: { x: number; y: number; w?: number; c?: string; s?: number; b?: number; anchor?: "middle" | "start"; children: React.ReactNode }) => (
  <ChartText x={x} y={y} $c={c} $s={s} $b={b} dominantBaseline="central" textAnchor={anchor} textLength={w} lengthAdjust={w ? "spacingAndGlyphs" : undefined}>{children}</ChartText>
);

const donutLabels: [number, number, number, string, string][] = [
  [346, 340, 77, "31.17K (16.47%)", "M327 347l4-9h11"],
  [396, 423, 77, "30.76K (16.25%)", "M372 422h20"],
  [354.5, 505, 77, "27.73K (14.65%)", "M336 498l4 7h12"],
  [166, 521, 77, "25.22K (13.33%)", "M260 512l-2 9h-14"],
  [116, 481, 70, "18.01K (9.51%)", "M208 470l-8 11h-10"],
  [99, 429, 70, "15.63K (8.26%)", "M173 429h20"],
  [108, 382, 71, "14.08K (7.44%)", "M182 381h10l10 5"],
  [138, 351, 64, "9.97K (5.27%)", "M206 350h11l6 7"],
  [163, 335, 65, "8.56K (4.52%)", "M232 334h11l3 8"],
];
const legend: [string, string, number][] = [
  ["Egypt", "#118DFF", 30], ["Morocco", "#12239E", 44], ["South Africa", "#E66C37", 65],
  ["Democratic Republic of the Con...", "#6B007B", 179], ["Nigeria", "#E044A7", 38], ["Tanzania", "#744EC2", 46], ["Algeria", "#D9B300", 37], ["Kenya", "#D64550", 31],
];
const legendY = [340, 363, 386, 409, 432, 455, 478, 502];

const DonutChart = () => (
  <svg width="673" height="232" viewBox="46 311 673 232">
    {donutPaths}
    {donutLabels.map(([x, y, w, t, d]) => (
      <g key={t}><path d={d} stroke="#b5b5b5" fill="none" /><Lab x={x} y={y} w={w} s={12}>{t}</Lab></g>
    ))}
    <Lab x={516} y={320} w={46} s={12} c="#555" b={700}>Country</Lab>
    {legend.map(([t, c, w], i) => (
      <g key={t}><circle cx={521} cy={legendY[i] - 1} r={4.5} fill={c} /><Lab x={527.5} y={legendY[i]} w={w} s={12}>{t}</Lab></g>
    ))}
    <path d="M611 528h11l-5.5 7z" fill="#252423" />
    <path d="M610 527h13" stroke="#fff" />
  </svg>
);

const BarChart = () => (
  <svg width="385" height="240" viewBox="46 572 385 240">
    {[[581, "0.3M"], [644, "0.2M"], [708, "0.1M"], [772, "0.0M"]].map(([y, t]) => (
      <g key={t as string}>
        <path d={`M103 ${y}H429`} stroke="#c4c4c4" strokeDasharray="1.5 3" />
        <Lab x={70} y={y as number} w={24} s={12}>{t}</Lab>
      </g>
    ))}
    <rect x="235" y="602" width="71" height="170" fill="#118DFF" />
    <Lab x={255} y={589} w={30} s={12}>0.27M</Lab>
    <Lab x={236} y={783} w={73} s={12}>Office Supplies</Lab>
    <Lab x={246} y={800} w={53} s={13} c="#333" b={500}>Category</Lab>
    <AxisText transform="translate(58 676) rotate(-90)" textAnchor="middle" dominantBaseline="central" textLength={75} lengthAdjust="spacingAndGlyphs">Sum of Sales</AxisText>
  </svg>
);

const PieChart = () => (
  <svg width="363" height="240" viewBox="432 572 363 240">
    <circle cx="583" cy="689.5" r="83" fill="#118DFF" />
    <path d="M583 775v8h11" stroke="#b5b5b5" fill="none" />
    <Lab x={598} y={784} w={74} s={12}>266.76K (100%)</Lab>
    <Lab x={732} y={679} w={40} s={12.5} c="#555" b={700}>Market</Lab>
    <circle cx="736" cy="698" r="4.5" fill="#118DFF" />
    <Lab x={743} y={699} w={31} s={12}>Africa</Lab>
  </svg>
);

const funnel: [string, number, number, number, number, string | null][] = [
  ["Standard Class", 893, 308, 616, 632, "147.43K"],
  ["Second Class", 983.5, 126.5, 654, 670, "60.44K"],
  ["First Class", 1005, 84, 691.5, 708, "40.14K"],
  ["Same Day", 1027, 39, 729, 746, null],
];
const FunnelChart = () => (
  <svg width="414" height="240" viewBox="796 572 414 240">
    <Lab x={1048} y={582.5} s={12} anchor="middle">100%</Lab>
    <path d="M893 590v17M893 599H1201M1201 590v17" stroke="#c4c4c4" strokeWidth="1.3" fill="none" />
    {funnel.map(([t, x, w, y, ty, v]) => (
      <g key={t}>
        <Lab x={800} y={ty} s={12}>{t}</Lab>
        <rect x={x} y={y} width={w} height={34} fill="#118DFF" />
        {v && <Lab x={1047} y={y + 17.5} s={12.5} c="#fff" anchor="middle">{v}</Lab>}
      </g>
    ))}
    <Lab x={1074} y={747} s={12.5}>18.74K</Lab>
    <path d="M1027 772v17M1027 780H1066M1066 772v17" stroke="#bdbdbd" strokeWidth="1.3" fill="none" />
    <Lab x={1048} y={798} s={12.5} anchor="middle">12.7%</Lab>
  </svg>
);

const dataBtns: [number, React.ReactNode, React.ReactNode, React.ReactNode, boolean?][] = [
  [60, <GetData />, "Get", "data", true], [62, <Excel />, "Excel", "workbook"], [76, <OneLake />, "OneLake", "catalog", true], [44, <Sql />, "SQL", "Server"],
  [56, <Enter />, "Enter", "data"], [64, <Dataverse />, "Dataverse", null], [76, <Recent />, "Recent", "sources", true],
];

const BigButton = ({ w, icon, a, b, caret, off }: { w: number; icon: React.ReactNode; a: React.ReactNode; b?: React.ReactNode; caret?: boolean; off?: boolean }) => (
  <BigBtn $w={w} $off={off}>
    {icon}
    <div>{a}</div>
    {(b || caret) && <div>{b}{caret && <CaretIcon c={off ? "#b5b5b5" : "#444"} />}</div>}
  </BigBtn>
);

export default function App() {
  return (
    <Page>
      <Global />
      <Ribbon>
        <TabRow>
          {([["File", 73], ["Home", 87, true], ["Insert", 83], ["Modeling", 114], ["View", 76], ["Optimize", 110], ["Help", 60]] as [string, number, boolean?][]).map(([t, w, a]) => (
            <MenuTab key={t} $w={w} $active={a}><span>{t}</span></MenuTab>
          ))}
          <ShareButton>
            <svg width="21" height="19" viewBox="0 0 19 18" fill="none" stroke="#fff" strokeWidth="1.1"><path d="M7 2H1v15h14v-5" /><path d="M11 1l7 5-7 5V8C7 8 5 10 4 13c0-5 3-8 7-8z" /></svg>
            Share
            <svg width="11" height="7" viewBox="0 0 11 7" fill="none" stroke="#fff" strokeWidth="1.2"><path d="M1 1l4.5 5L10 1" /></svg>
          </ShareButton>
        </TabRow>
        <GroupRow>
          <Group $w={196}>
            <Clip>
              <PasteBtn $w={36} $off>
                <svg className="ico" viewBox="0 0 40 40" fill="none"><path d="M12 5H4v33h20" fill="#fdf3e7" stroke="#f2cfa6" strokeWidth="1.6" /><path d="M12 5c0-4 11-4 11 0h5v10" stroke="#d9d9d9" strokeWidth="1.6" /><rect x="18" y="17" width="18" height="22" fill="#f4f4f4" stroke="#c8c8c8" strokeWidth="1.6" /></svg>
                <div>Paste</div>
              </PasteBtn>
              <ClipList>
                <ClipItem><Cross />Cut</ClipItem>
                <ClipItem><CopyI />Copy</ClipItem>
                <ClipItem><Brush />Format painter</ClipItem>
              </ClipList>
            </Clip>
            <GroupLabel>Clipboard</GroupLabel>
          </Group>
          <Group $w={448} $pad={4}>
            <GroupBody>
              {dataBtns.map(([w, icon, a, b, c], i) => <BigButton key={i} w={w} icon={icon} a={a} b={b} caret={c} />)}
            </GroupBody>
            <GroupLabel>Data</GroupLabel>
          </Group>
          <Group $w={145} $pad={6}>
            <GroupBody>
              <BigButton w={77} icon={<Transform />} a="Transform" b="data" caret />
              <BigButton w={48} icon={<Refresh />} a="Refresh" />
            </GroupBody>
            <GroupLabel>Queries</GroupLabel>
          </Group>
          <Group $w={183} $pad={11}>
            <GroupBody>
              <BigButton w={48} icon={<NewVisual />} a="New" b="visual" />
              <BigButton w={51} icon={<TextBox />} a="Text" b="box" />
              <BigButton w={62} icon={<MoreVis />} a="More" b="visuals" caret />
            </GroupBody>
            <GroupLabel $off={-11}>Insert</GroupLabel>
          </Group>
          <Group $w={233} $pad={6}>
            <GroupBody>
              <BigButton w={100} icon={<Fx />} a="New visual" b="calculation" caret off />
              <BigButton w={51} icon={<Measure />} a="New" b="measure" />
              <BigButton w={72} icon={<Quick />} a="Quick" b="measure" />
            </GroupBody>
            <GroupLabel>Calculations</GroupLabel>
          </Group>
          <Group $w={91}>
            <GroupBody>
              <BigButton w={90} icon={<Sens />} a="Sensitivity" caret off />
            </GroupBody>
            <GroupLabel>Sensitivity</GroupLabel>
          </Group>
          <Group $w={75}>
            <GroupBody><BigButton w={74} icon={<Publish />} a="Publish" /></GroupBody>
            <GroupLabel>Share</GroupLabel>
          </Group>
          <Group $w={73}>
            <GroupBody><BigButton w={72} icon={<Copilot />} a="Copilot" /></GroupBody>
            <GroupLabel>Copilot</GroupLabel>
          </Group>
        </GroupRow>
        <CollapseBtn viewBox="0 0 10 7"><path d="M1 6l4-4.5L9 6" stroke="#252423" strokeWidth="1.5" fill="none" /></CollapseBtn>
      </Ribbon>
      <Main>
        <Rail>
          <svg viewBox="0 0 25 25" fill="none" stroke="#444" strokeWidth="1.3"><path d="M3 3v19h19" strokeWidth="1" /><rect x="5" y="10" width="4" height="10" /><rect x="10.5" y="12" width="4" height="8" /><rect x="16" y="6" width="4" height="14" /></svg>
          <svg viewBox="0 0 25 25" fill="none" stroke="#777" strokeWidth="1.1"><rect x="2.5" y="2.5" width="20" height="20" /><path d="M2.5 6h20M2.5 11h20M2.5 16h20M9 3v19M16 3v19" /></svg>
          <svg viewBox="0 0 25 25" fill="none" stroke="#777" strokeWidth="1.2"><rect x="1" y="6" width="10" height="14" /><rect x="14" y="1" width="10" height="7" /><rect x="14" y="10" width="10" height="6" /><rect x="14" y="18" width="10" height="6" /><path d="M1 11h10M1 15h10M11 8h3M11 17h3" /></svg>
          <svg viewBox="0 0 25 25" fill="none" stroke="#777" strokeWidth="1.1"><path d="M6 13V1h9l5 5v13" /><path d="M15 1v5h5M18 22c3 0 3-2 3-6" /><text x="0" y="21" fontFamily="Liberation Sans" fontWeight="700" fontSize="8.5" fill="#666" stroke="none">DAX</text></svg>
        </Rail>
        <Center>
          <CanvasWrap>
            <TopBlock>
              <TitleCol>
                <TitleBand>ECOMMERCE SALES ANALYSIS REPORT:</TitleBand>
                <KpiRow>
                  <Kpi $w={185} $bg="#e1c233" $bc="#6f5f22"><KpiValue>266.76K</KpiValue><KpiLabel>Sum of Sales</KpiLabel></Kpi>
                  <Kpi $w={200} $bg="#ec8ac8" $bc="#6d4a63"><KpiValue>28.48K</KpiValue><KpiLabel>Sum of Profit</KpiLabel></Kpi>
                  <Kpi $w={187} $bg="#9fcfff" $bc="#5a6e80"><KpiValue>7102</KpiValue><KpiLabel>Sum of Quantity</KpiLabel></Kpi>
                  <Kpi $w={203} $bg="#f0b0b5" $bc="#7a6163"><KpiValue>31.10K</KpiValue><KpiLabel>Sum of Shipping Cost</KpiLabel></Kpi>
                </KpiRow>
              </TitleCol>
              <Slicers>
                <Slicer $w={191} $bg="#c8c8c8">
                  <SlicerTitle>Category</SlicerTitle>
                  <SlicerChevron viewBox="0 0 12 8"><path d="M1 1l5 5.5L11 1" stroke="#666" fill="none" /></SlicerChevron>
                  <SlicerItem><Box />Furniture</SlicerItem>
                  <SlicerItem><Box $on />Office Supplies</SlicerItem>
                  <SlicerItem><Box />Technology</SlicerItem>
                </Slicer>
                <Slicer $w={199} $bg="#c399c6">
                  <SlicerTitle>Market</SlicerTitle>
                  <SlicerChevron viewBox="0 0 12 8"><path d="M1 1l5 5.5L11 1" stroke="#666" fill="none" /></SlicerChevron>
                  <ScrollThumb />
                  <SlicerItem><Box $on />Africa</SlicerItem>
                  <SlicerItem><Box />APAC</SlicerItem>
                  <SlicerItem><Box />Canada</SlicerItem>
                  <SlicerItem><Box />EMEA</SlicerItem>
                </Slicer>
              </Slicers>
            </TopBlock>
            <ChartRow>
              <ChartCol $w={674}>
                <Band $bg="#f0e199" $h={27} $lh={20}>TOP 5 COUNTRY SALES</Band>
                <DonutBody><DonutChart /></DonutBody>
              </ChartCol>
              <ChartCol $w={491}>
                <Band $bg="#f0e199" $h={27} $lh={20}>Top3 State Sales</Band>
                <TreeBody>
                  <Tile $bg="#118DFF" $tall><span>Gauteng</span><span>16.97K</span></Tile>
                  <Tile $bg="#12239E"><span>Kinshasa</span><span>13.37K</span></Tile>
                  <Tile $bg="#E66C37"><span>Al Qahirah</span><span>12.36K</span></Tile>
                </TreeBody>
              </ChartCol>
            </ChartRow>
            <BottomRow>
              <BottomCol>
                <Band $bg="#d9b300" $h={29} $lh={23} $pl={16} $ls={0}>sales by category</Band>
                <BarChart />
              </BottomCol>
              <BottomCol>
                <Band $bg="#d9b300" $h={29} $lh={23}>Sales by Market</Band>
                <PieChart />
              </BottomCol>
              <BottomCol $end>
                <Band $bg="#d9b300" $h={29} $lh={23}>Sales by Ship Mode</Band>
                <FunnelChart />
              </BottomCol>
            </BottomRow>
          </CanvasWrap>
          <PageBar>
            <ViewIcons>
              <ViewIcon $w={58} $on>
                <svg width="24" height="24" viewBox="0 0 24 24" fill="none" stroke="#605e5c" strokeWidth="1.4"><rect x="1" y="3" width="22" height="14" /><path d="M12 17v4M7 21h10" /></svg>
              </ViewIcon>
              <ViewIcon $w={48}>
                <svg width="16" height="26" viewBox="0 0 16 26" fill="none" stroke="#605e5c" strokeWidth="1.4"><rect x="1" y="1" width="14" height="24" rx="2" /><path d="M7 21h2" /></svg>
              </ViewIcon>
              <Arrows>
                <svg viewBox="0 0 7 10"><path d="M7 0v10L0 5z" fill="#d2d0ce" /></svg>
                <svg viewBox="0 0 7 10"><path d="M0 0v10l7-5z" fill="#d2d0ce" /></svg>
              </Arrows>
            </ViewIcons>
            <PageTab $on>Page 1</PageTab>
            <PageTab>Page 2</PageTab>
            <AddTab><svg viewBox="0 0 15 15"><path d="M7.5 1v13M1 7.5h13" stroke="#fff" strokeWidth="3" /></svg></AddTab>
          </PageBar>
        </Center>
        <Pane $w={251} $bg="#fff" $b>
          <PaneHead $pad={14}>
            <svg width="20" height="20" viewBox="0 0 20 20" fill="none" stroke="#252423" strokeWidth="1.5"><path d="M1 2h18l-7 8v8l-4-2v-6z" /></svg>
            <span>Filters</span>
            <Grow />
            <svg width="16" height="12" viewBox="0 0 16 12" fill="none" stroke="#252423" strokeWidth="1.2" style={{ marginRight: 12 }}><path d="M1 7c3-6 11-6 14 0" /><circle cx="8" cy="7" r="2.5" /></svg>
            <span style={{ display: "flex", marginRight: -1 }}><Chevrons /></span>
          </PaneHead>
          <FilterSearch><SearchI size={18} />Search</FilterSearch>
          <Divider />
          <FilterSection $t={20}><span>Filters on this page</span><Dots>...</Dots></FilterSection>
          <FilterCard>Add data fields here</FilterCard>
          <FilterSection $t={34}><span>Filters on all pages</span><Dots>...</Dots></FilterSection>
          <FilterCard>Add data fields here</FilterCard>
        </Pane>
        <Pane $w={225} $bg="#f3f2f1" $b>
          <PaneHead $pad={9}><span>Visualizations</span><Grow /><span style={{ display: "flex", marginRight: 1 }}><Chevrons /></span></PaneHead>
          <BuildLabel>Build visual</BuildLabel>
          <BuildTabs>
            <BuildTab $on>
              <svg viewBox="0 0 34 34" fill="none"><path d="M2 2h30" stroke="#444" strokeWidth="1.3" /><rect x="2" y="7" width="30" height="10" fill={GREEN} stroke="#333" strokeDasharray="1.5 1.5" /><rect x="2" y="21" width="30" height="10" fill={GREEN} stroke="#333" strokeDasharray="1.5 1.5" /></svg>
            </BuildTab>
            <BuildTab>
              <svg viewBox="0 0 34 34" fill="none" stroke="#333" strokeWidth="1.3"><path d="M8 30H3V2h15l8 8v8" /><path d="M18 2v8h8" /><path d="M32 13L20 24" strokeWidth="2.4" /><path d="M20 24c-3-1-6 2-6 4 0 2-3 3-4 3 3 2 10 1 11-3 0-2 0-3-1-4z" fill="#fff" /></svg>
            </BuildTab>
          </BuildTabs>
          <NotchLine />
          <VizGrid>
            {vizIcons.map((n, i) => <Ico key={i}>{n}</Ico>)}
          </VizGrid>
          <More>...</More>
          <PaneRule />
          <FieldLabel $t={12}>Values</FieldLabel>
          <Drop $h={34} $t={5} $l={13}>Add data fields here</Drop>
          <FieldLabel $t={15} $sb>Drill through</FieldLabel>
          <ToggleRow $t={10}><span>Cross-report</span><Toggle>Off</Toggle></ToggleRow>
          <ToggleRow $t={15}><span>Keep all filters</span><Toggle $on>On</Toggle></ToggleRow>
          <Drop $h={31} $t={13} $l={10}>Add drill-through fields here</Drop>
        </Pane>
        <Pane $w={220} $bg="#f3f2f1">
          <PaneHead $pad={11}><span>Data</span><Grow /><span style={{ display: "flex", marginRight: -6 }}><Chevrons /></span></PaneHead>
          <DataSearch><SearchI size={18} />Search</DataSearch>
          <TreeRow>
            <svg width="8" height="14" viewBox="0 0 8 14" fill="none" stroke="#444" strokeWidth="1.1"><path d="M1 1l6 6-6 6" /></svg>
            <svg width="15" height="15" viewBox="0 0 15 15" fill="none" stroke="#444" strokeWidth="1.2"><rect x="1" y="1" width="13" height="13" rx="2" /><path d="M1 5h13M1 10h13M5 1v13M10 1v13" /></svg>
            <span>Orders</span>
          </TreeRow>
        </Pane>
      </Main>
      <Status>
        <span>Page 1 of 2</span>
        <ZoomBox>
          <svg width="154" height="16" viewBox="0 0 154 16" fill="none" stroke="#605e5c"><path d="M4 8h6" strokeWidth="2" /><path d="M13 8h125" /><rect x="54" y="2" width="5" height="13" fill="#605e5c" /><path d="M75 5v6" /><path d="M144 8h10M149 3v10" strokeWidth="1.6" /></svg>
          <ZoomPct>73%</ZoomPct>
          <svg width="20" height="16" viewBox="0 0 20 16" fill="none" stroke="#605e5c"><rect x=".5" y=".5" width="19" height="15" stroke="#8a8886" /><path d="M6 4H3v2M14 4h3v2M6 12H3v-2M14 12h3v-2" /></svg>
        </ZoomBox>
      </Status>
      <Black />
    </Page>
  );
}
